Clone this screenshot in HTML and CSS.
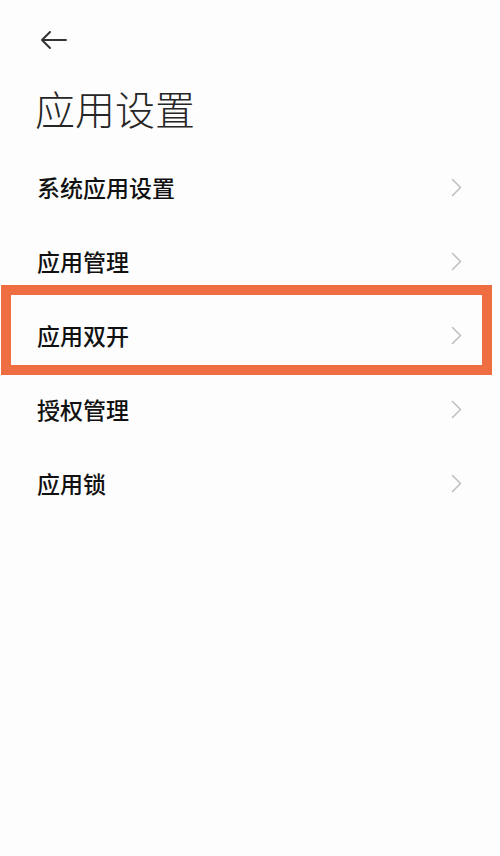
FILE: index.html
```html
<!DOCTYPE html>
<html lang="zh-CN">
<head>
<meta charset="utf-8">
<title>应用设置</title>
<link rel="stylesheet" href="styles.css">
</head>
<body>
<div class="screen">
  <div class="topbar">
    <svg class="back" width="28" height="20" viewBox="0 0 28 20" fill="none" stroke="#333" stroke-width="2" stroke-linecap="round" stroke-linejoin="round">
      <path d="M2 10 H26 M10 2 L2 10 L10 18"/>
    </svg>
  </div>
  <h1 class="title">应用设置</h1>
  <ul class="list">
    <li class="row"><span class="label">系统应用设置</span><svg class="chev" width="11" height="19" viewBox="0 0 11 19" fill="none" stroke="#bdbdbd" stroke-width="1.5" stroke-linecap="round" stroke-linejoin="round"><path d="M1.5 1.5 L9.5 9.5 L1.5 17.5"/></svg></li>
    <li class="row"><span class="label">应用管理</span><svg class="chev" width="11" height="19" viewBox="0 0 11 19" fill="none" stroke="#bdbdbd" stroke-width="1.5" stroke-linecap="round" stroke-linejoin="round"><path d="M1.5 1.5 L9.5 9.5 L1.5 17.5"/></svg></li>
    <li class="row highlighted"><span class="label">应用双开</span><svg class="chev" width="11" height="19" viewBox="0 0 11 19" fill="none" stroke="#bdbdbd" stroke-width="1.5" stroke-linecap="round" stroke-linejoin="round"><path d="M1.5 1.5 L9.5 9.5 L1.5 17.5"/></svg><span class="mark"></span></li>
    <li class="row"><span class="label">授权管理</span><svg class="chev" width="11" height="19" viewBox="0 0 11 19" fill="none" stroke="#bdbdbd" stroke-width="1.5" stroke-linecap="round" stroke-linejoin="round"><path d="M1.5 1.5 L9.5 9.5 L1.5 17.5"/></svg></li>
    <li class="row"><span class="label">应用锁</span><svg class="chev" width="11" height="19" viewBox="0 0 11 19" fill="none" stroke="#bdbdbd" stroke-width="1.5" stroke-linecap="round" stroke-linejoin="round"><path d="M1.5 1.5 L9.5 9.5 L1.5 17.5"/></svg></li>
  </ul>
</div>
</body>
</html>
```
FILE: styles.css
```css
html, body {
  margin: 0;
  padding: 0;
  background: #fdfdfd;
}
body {
  font-family: "Noto Sans CJK SC", "Noto Sans", sans-serif;
  color: #141414;
}
.screen {
  width: 500px;
  height: 856px;
  overflow: hidden;
}
.topbar {
  height: 40px;
  padding: 20px 0 0 40px;
  display: flex;
  align-items: center;
}
.back {
  display: block;
}
.title {
  margin: 8px 0 2px 0;
  padding-left: 35px;
  font-size: 40px;
  line-height: 80px;
  font-weight: 300;
  color: #262626;
}
.list {
  list-style: none;
  margin: 0;
  padding: 0;
}
.row {
  position: relative;
  height: 74px;
  display: flex;
  align-items: center;
  justify-content: space-between;
  padding: 0 38px 0 37px;
}
.label {
  font-size: 23px;
  font-weight: 500;
  color: #111;
}
.chev {
  display: block;
}
.mark {
  position: absolute;
  left: 1px;
  top: -13px;
  width: 491px;
  height: 90px;
  box-sizing: border-box;
  border: 10px solid #ee6e42;
}
```
